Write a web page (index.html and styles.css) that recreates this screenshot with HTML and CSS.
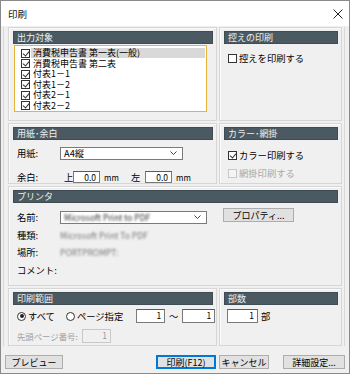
FILE: index.html
```html
<!DOCTYPE html>
<html lang="ja">
<head>
    <meta charset="UTF-8">
    <meta name="viewport" content="width=device-width, initial-scale=1.0">
    <title>印刷</title>
    <link rel="stylesheet" href="styles.css">
</head>
<body>
<div class="window">
    <div class="titlebar">
        <span class="title">印刷</span>
        <svg class="close" width="10" height="10" viewBox="0 0 10 10"><path d="M0.5 0.5L9.5 9.5M9.5 0.5L0.5 9.5" stroke="#222" stroke-width="1" fill="none"/></svg>
    </div>

    <div class="content">
        <div class="frame">
            <!-- 出力対象 -->
            <section class="panel">
                <div class="head">出力対象</div>
                <div class="listbox">
                    <div class="item"><span class="cb on"></span><span class="txt sel">消費税申告書 第一表(一般)</span></div>
                    <div class="item"><span class="cb on"></span><span class="txt">消費税申告書 第二表</span></div>
                    <div class="item"><span class="cb on"></span><span class="txt">付表1－1</span></div>
                    <div class="item"><span class="cb on"></span><span class="txt">付表1－2</span></div>
                    <div class="item"><span class="cb on"></span><span class="txt">付表2－1</span></div>
                    <div class="item"><span class="cb on"></span><span class="txt">付表2－2</span></div>
                </div>
            </section>

            <section class="panel">
                <div class="head">控えの印刷</div>
                <div class="check copy"><span class="cb"></span>控えを印刷する</div>
            </section>

            <!-- 用紙・余白 -->
            <section class="panel">
                <div class="head">用紙･余白</div>
                <div class="field paper">
                    <span class="lbl">用紙:</span>
                    <div class="select w-paper"><span class="val">A4縦</span><svg class="arrow" width="7" height="4" viewBox="0 0 7 4"><path d="M0.5 0.5L3.5 3.5L6.5 0.5" stroke="#444" fill="none"/></svg></div>
                </div>
                <div class="field margin">
                    <span class="lbl">余白:</span>
                    <span class="side">上</span>
                    <span class="input w-mm">0.0</span>
                    <span class="unit">mm</span>
                    <span class="side left">左</span>
                    <span class="input w-mm">0.0</span>
                    <span class="unit">mm</span>
                </div>
            </section>

            <section class="panel">
                <div class="head">カラー･網掛</div>
                <div class="check color"><span class="cb on"></span>カラー印刷する</div>
                <div class="check shade disabled"><span class="cb"></span>網掛印刷する</div>
            </section>

            <!-- プリンタ -->
            <section class="panel wide">
                <div class="head">プリンタ</div>
                <div class="field name">
                    <span class="lbl">名前:</span>
                    <div class="select w-printer"><span class="val blur">Microsoft Print to PDF</span><svg class="arrow" width="7" height="4" viewBox="0 0 7 4"><path d="M0.5 0.5L3.5 3.5L6.5 0.5" stroke="#444" fill="none"/></svg></div>
                    <span class="btn prop">プロパティ...</span>
                </div>
                <div class="field info">
                    <span class="lbl">種類:</span>
                    <span class="blur grey">Microsoft Print To PDF</span>
                </div>
                <div class="field info">
                    <span class="lbl">場所:</span>
                    <span class="blur grey">PORTPROMPT:</span>
                </div>
                <div class="field info comment">
                    <span class="lbl">コメント:</span>
                </div>
            </section>

            <!-- 印刷範囲 -->
            <section class="panel">
                <div class="head">印刷範囲</div>
                <div class="field range">
                    <span class="radio on"></span><span class="rtext">すべて</span>
                    <span class="radio page"></span><span class="rtext">ページ指定</span>
                    <span class="input w-from">1</span>
                    <span class="tilde">～</span>
                    <span class="input w-to">1</span>
                </div>
                <div class="field first">
                    <span class="lbl-first">先頭ページ番号:</span>
                    <span class="input w-first disabled">1</span>
                </div>
            </section>

            <section class="panel">
                <div class="head">部数</div>
                <div class="field copies">
                    <span class="input w-copies">1</span>
                    <span class="unit-bu">部</span>
                </div>
            </section>
        </div>

        <div class="buttons">
            <span class="btn preview">プレビュー</span>
            <span class="btn print default">印刷(F12)</span>
            <span class="btn cancel">キャンセル</span>
            <span class="btn detail">詳細設定...</span>
        </div>
    </div>
</div>
</body>
</html>
```

FILE: styles.css
```css
* {
    box-sizing: border-box;
}
body {
    margin: 0;
    font-family: "Noto Sans CJK JP", "Noto Sans", sans-serif;
    font-size: 9.3px;
    color: #000;
    background: #fff;
    white-space: nowrap;
}
.window {
    width: 350px;
    height: 374px;
    border: 1px solid #8a8a8a;
    background: #f0f0f0;
    display: flex;
    flex-direction: column;
}
.titlebar {
    height: 25px;
    flex: none;
    background: #fff;
    display: flex;
    align-items: center;
    justify-content: space-between;
    padding: 0 6px 0 7px;
}
.title {
    font-size: 9.5px;
    color: #111;
}
.content {
    flex: 1;
    padding: 1px 0 0 2px;
}
.frame {
    width: 342px;
    border-left: 1px solid #d8d8d8;
    border-right: 1px solid #d8d8d8;
    padding: 0 2px 0 4px;
    display: grid;
    grid-template-columns: 209px 123px;
    grid-template-rows: 94px 61px 100px 58px;
    gap: 2px;
}
.panel {
    border: 1px solid #d6d6d6;
    box-shadow: inset 1px 1px 0 #fbfbfb;
    padding: 3px 3px 0 4px;
}
.panel.wide {
    grid-column: 1 / 3;
}
.head {
    height: 13px;
    line-height: 12px;
    background: #4b5a62;
    color: #eef0f1;
    font-size: 9px;
    padding-left: 3px;
    border: 1px solid #3f4c54;
}

/* checkbox / radio */
.cb {
    width: 9px;
    height: 9px;
    flex: none;
    border: 1px solid #333;
    background: #fff;
    position: relative;
}
.cb.on::after {
    content: "";
    position: absolute;
    left: 2px;
    top: 0;
    width: 3px;
    height: 5px;
    border: solid #333;
    border-width: 0 1px 1px 0;
    transform: rotate(40deg);
}
.radio {
    width: 9px;
    height: 9px;
    flex: none;
    border: 1px solid #333;
    border-radius: 50%;
    background: #fff;
    display: flex;
    align-items: center;
    justify-content: center;
}
.radio.on::after {
    content: "";
    width: 4px;
    height: 4px;
    border-radius: 50%;
    background: #222;
}

/* 出力対象 list */
.listbox {
    margin: 1px 0 0 1px;
    width: 193px;
    height: 67px;
    background: #fff;
    border: 1px solid #e8b23a;
    padding: 2px 1px 0 6px;
    overflow: hidden;
}
.item {
    height: 10.5px;
    display: flex;
    align-items: center;
}
.txt {
    flex: 1;
    margin-left: 1px;
    padding-left: 2px;
    height: 10px;
    line-height: 10px;
    font-size: 9px;
}
.txt.sel {
    background: #d9d9d9;
}

.check {
    display: flex;
    align-items: center;
    gap: 2px;
    margin-left: 4px;
    height: 10px;
}
.check.copy {
    margin-top: 9px;
}
.check.color {
    margin-top: 10px;
}
.check.shade {
    margin-top: 8px;
}
.check.disabled {
    color: #a8a8a8;
}
.check.disabled .cb {
    border-color: #c8c8c8;
    background: #f4f4f4;
}

/* fields */
.field {
    display: flex;
    align-items: center;
    margin-left: 4px;
}
.field > span {
    flex: none;
}
.lbl {
    width: 43px;
}
.select {
    height: 13px;
    flex: none;
    background: #fff;
    border: 1px solid #7a7a7a;
    display: flex;
    align-items: center;
    justify-content: space-between;
    padding: 0 5px 0 3px;
}
.arrow {
    flex: none;
}
.input {
    height: 12px;
    background: #fff;
    border: 1px solid #7a7a7a;
    border-top-color: #5a5a5a;
    text-align: right;
    padding-right: 3px;
    line-height: 10px;
    font-size: 8.5px;
}
.input.disabled {
    background: #f0f0f0;
    border-color: #c8c8c8;
    color: #9a9a9a;
}

.paper {
    margin-top: 6px;
}
.w-paper {
    width: 123px;
}
.margin {
    margin-top: 10px;
}
.side {
    margin-left: 4px;
    width: 9px;
}
.side.left {
    margin-left: 11px;
    width: 14px;
}
.w-mm {
    width: 27px;
}
.unit {
    margin-left: 4px;
    width: 16px;
    font-size: 8px;
}

.name {
    margin-top: 7px;
}
.w-printer {
    width: 147px;
}
.blur {
    filter: blur(1px);
    color: #333;
    font-size: 8.5px;
}
.blur.grey {
    color: #777;
}
.info {
    margin-top: 4px;
    height: 13px;
}
.comment {
    margin-top: 5px;
}

.btn {
    height: 14px;
    display: flex;
    align-items: center;
    justify-content: center;
    background: #e1e1e1;
    border: 1px solid #adadad;
    font-size: 9px;
    flex: none;
}
.btn.prop {
    width: 71px;
    margin-left: 16px;
    align-self: flex-start;
    margin-top: -2px;
}
.btn.default {
    border-color: #0078d7;
    box-shadow: inset 0 0 0 1px #0078d7;
}

.range {
    margin-top: 4px;
    height: 14px;
}
.rtext {
    margin-left: 2px;
}
.radio.page {
    margin-left: 11px;
}
.w-from {
    width: 29px;
    height: 14px;
    margin-left: 13px;
}
.tilde {
    width: 17px;
    text-align: center;
}
.w-to {
    width: 33px;
    height: 14px;
}
.first {
    margin-top: 6px;
    height: 14px;
}
.lbl-first {
    width: 65px;
    font-size: 8.4px;
    color: #a0a0a0;
}
.w-first {
    width: 29px;
    height: 14px;
}

.copies {
    margin: 4px 0 0 3px;
}
.w-copies {
    width: 31px;
    height: 14px;
}
.unit-bu {
    margin-left: 3px;
}

.buttons {
    display: flex;
    margin-top: 9px;
}
.preview {
    width: 58px;
    margin-left: 2px;
}
.print {
    width: 60px;
    margin-left: 93px;
}
.cancel {
    width: 50px;
    margin-left: 3px;
}
.detail {
    width: 62px;
    margin-left: 14px;
}
```
